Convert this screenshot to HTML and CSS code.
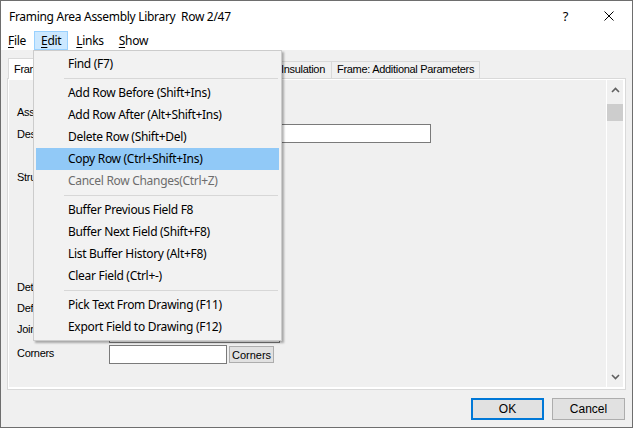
FILE: index.html
```html
<!DOCTYPE html>
<html lang="en">
    <head>
        <meta charset="UTF-8">
        <title>Framing Area Assembly Library</title>
        <link rel="stylesheet" href="styles.css">
    </head>
    <body>
        <div class="window">

            <!-- title bar -->
            <div class="titlebar">
                <span class="title">Framing Area Assembly Library&nbsp; Row 2/47</span>
                <span class="help">?</span>
                <svg class="close" width="10" height="10" viewBox="0 0 10 10">
                    <path d="M0.5 0.5 L9.5 9.5 M9.5 0.5 L0.5 9.5" stroke="#000" stroke-width="1" fill="none"/>
                </svg>
            </div>

            <!-- menu bar -->
            <div class="menubar">
                <span class="menu-item"><u>F</u>ile</span>
                <span class="menu-item open"><u>E</u>dit</span>
                <span class="menu-item"><u>L</u>inks</span>
                <span class="menu-item"><u>S</u>how</span>
            </div>

            <div class="client">
                <!-- tabs -->
                <div class="tabs">
                    <div class="tab selected tab-framing">Framing</div>
                    <div class="tab tab-structure"></div>
                    <div class="tab tab-insulation">Insulation</div>
                    <div class="tab">Frame: Additional Parameters</div>
                </div>

                <div class="panel">
                    <div class="page">
                        <div class="form">
                            <div class="row r1">
                                <label>Assembly</label>
                            </div>
                            <div class="row r2">
                                <label>Description</label>
                                <input type="text" class="field wide">
                            </div>
                            <div class="row r3">
                                <label>Structure</label>
                            </div>
                            <div class="row r4">
                                <label>Detail</label>
                            </div>
                            <div class="row r5">
                                <label>Default</label>
                            </div>
                            <div class="row r6">
                                <label>Joint</label>
                                <input type="text" class="field joint">
                            </div>
                            <div class="row r7">
                                <label>Corners</label>
                                <input type="text" class="field short">
                                <button class="small-btn">Corners</button>
                            </div>
                        </div>

                        <div class="vscroll">
                            <svg class="arrow" width="9" height="6" viewBox="0 0 9 6">
                                <path d="M1 5 L4.5 1.5 L8 5" stroke="#606060" stroke-width="1.6" fill="none"/>
                            </svg>
                            <div class="thumb"></div>
                            <div class="track"></div>
                            <svg class="arrow" width="9" height="6" viewBox="0 0 9 6">
                                <path d="M1 1 L4.5 4.5 L8 1" stroke="#606060" stroke-width="1.6" fill="none"/>
                            </svg>
                        </div>
                    </div>
                </div>

                <!-- dialog buttons -->
                <div class="footer">
                    <button class="btn default">OK</button>
                    <button class="btn">Cancel</button>
                </div>
            </div>

            <!-- open Edit menu -->
            <div class="dropdown">
                <div class="item">Find (F7)</div>
                <div class="sep"></div>
                <div class="item">Add Row Before (Shift+Ins)</div>
                <div class="item">Add Row After (Alt+Shift+Ins)</div>
                <div class="item">Delete Row (Shift+Del)</div>
                <div class="item hover">Copy Row (Ctrl+Shift+Ins)</div>
                <div class="item disabled">Cancel Row Changes(Ctrl+Z)</div>
                <div class="sep"></div>
                <div class="item">Buffer Previous Field F8</div>
                <div class="item">Buffer Next Field (Shift+F8)</div>
                <div class="item">List Buffer History (Alt+F8)</div>
                <div class="item">Clear Field (Ctrl+-)</div>
                <div class="sep"></div>
                <div class="item">Pick Text From Drawing (F11)</div>
                <div class="item">Export Field to Drawing (F12)</div>
            </div>

        </div>
    </body>
</html>
```

FILE: styles.css
```css
html, body {
    margin: 0;
    padding: 0;
}
body {
    width: 633px;
    height: 428px;
    overflow: hidden;
    background: #f0f0f0;
}
.window {
    position: relative;
    box-sizing: border-box;
    width: 633px;
    height: 428px;
    border: 1px solid #6e6e6e;
    background: #f0f0f0;
    display: flex;
    flex-direction: column;
    font-family: "Noto Sans", "Liberation Sans", sans-serif;
    font-size: 12px;
    letter-spacing: -0.3px;
    color: #000;
}

/* title bar */
.titlebar {
    height: 30px;
    background: #fff;
    display: flex;
    align-items: center;
    padding-left: 8px;
}
.title {
    flex: 1;
}
.help {
    font-size: 13px;
    margin-right: 36px;
}
.close {
    margin-right: 18px;
}

/* menu bar */
.menubar {
    height: 19px;
    background: #fff;
    display: flex;
}
.menu-item {
    box-sizing: border-box;
    height: 19px;
    line-height: 17px;
    padding: 0 6px;
    border: 1px solid transparent;
    margin-right: 1px;
}
.menu-item u {
    text-underline-offset: 2px;
}
.menu-item.open {
    background: #cce8ff;
    border-color: #99d1ff;
}

/* client area */
.client {
    flex: 1;
    display: flex;
    flex-direction: column;
    padding: 0 6px;
}
.tabs {
    height: 28px;
    display: flex;
    align-items: flex-end;
    font-family: "Liberation Sans", Arial, sans-serif;
    font-size: 11px;
    letter-spacing: -0.3px;
    white-space: nowrap;
}
.tab {
    box-sizing: border-box;
    height: 17px;
    line-height: 15px;
    padding: 0 5px;
    border: 1px solid #d9d9d9;
    border-bottom: none;
    margin-left: -1px;
    background: #f0f0f0;
}
.tab.selected {
    height: 21px;
    line-height: 20px;
    background: #fff;
    margin-left: 1px;
    margin-bottom: -1px;
    position: relative;
    z-index: 1;
}
.tab-framing {
    width: 60px;
}
.tab-structure {
    width: 172px;
}
.tab-insulation {
    width: 94px;
    text-align: right;
    padding-right: 6px;
}

.panel {
    height: 312px;
    box-sizing: border-box;
    border: 1px solid #d9d9d9;
    background: #fff;
    padding: 1px 2px 2px 1px;
}
.page {
    height: 100%;
    display: flex;
    background: #f0f0f0;
}
.form {
    flex: 1;
    padding: 22px 0 0 8px;
    font-family: "Liberation Sans", Arial, sans-serif;
    font-size: 11px;
}
.row {
    display: flex;
    align-items: center;
}
.row label {
    width: 92px;
    flex: none;
}
.r1 { height: 20px; }
.r2 { height: 23px; }
.r3 {
    height: 131px;
    align-items: flex-start;
}
.r3 label {
    padding-top: 26px;
}
.r4 { height: 21px; }
.r5 { height: 21px; }
.r6 { height: 22px; }
.r6 .field {
    align-self: flex-end;
    margin-bottom: -3px;
}
.r7 { height: 25px; }
.r7 .field, .r7 .small-btn {
    margin-top: 4px;
}
.field {
    box-sizing: border-box;
    height: 19px;
    margin: 0;
    border: 1px solid #7a7a7a;
    background: #fff;
    padding: 0 2px;
}
.wide {
    width: 322px;
}
.joint {
    width: 171px;
    height: 20px;
}
.short {
    width: 118px;
}
.small-btn {
    box-sizing: border-box;
    height: 17px;
    margin-left: 2px;
    padding: 0 2px;
    border: 1px solid #adadad;
    background: #e1e1e1;
    font-family: "Liberation Sans", Arial, sans-serif;
    font-size: 11px;
    color: #000;
}

/* scroll bar */
.vscroll {
    width: 16px;
    border-left: 1px solid #fff;
    display: flex;
    flex-direction: column;
    align-items: center;
}
.arrow {
    margin: 7px 0;
}
.thumb {
    width: 16px;
    height: 17px;
    margin-top: 4px;
    background: #cdcdcd;
}
.track {
    flex: 1;
}

/* footer */
.footer {
    flex: 1;
    display: flex;
    justify-content: flex-end;
    align-items: flex-start;
    gap: 8px;
    padding-top: 8px;
    padding-right: 1px;
}
.btn {
    box-sizing: border-box;
    width: 73px;
    height: 22px;
    border: 1px solid #adadad;
    background: #e1e1e1;
    font-family: "Liberation Sans", Arial, sans-serif;
    font-size: 12px;
    color: #000;
    padding: 0;
}
.btn.default {
    border: 2px solid #0078d7;
}

/* dropdown menu */
.dropdown {
    position: absolute;
    left: 32px;
    top: 49px;
    width: 249px;
    box-sizing: border-box;
    padding: 2px 0;
    background: #f2f2f2;
    border: 1px solid #cccccc;
    box-shadow: 2px 2px 2px rgba(0, 0, 0, 0.3);
    z-index: 5;
}
.item {
    height: 22px;
    line-height: 22px;
    margin: 0 2px;
    padding-left: 32px;
}
.item.hover {
    background: #91c9f7;
}
.item.disabled {
    color: #6d6d6d;
}
.sep {
    height: 1px;
    background: #d7d7d7;
    margin: 3px 3px 3px 30px;
}
```
